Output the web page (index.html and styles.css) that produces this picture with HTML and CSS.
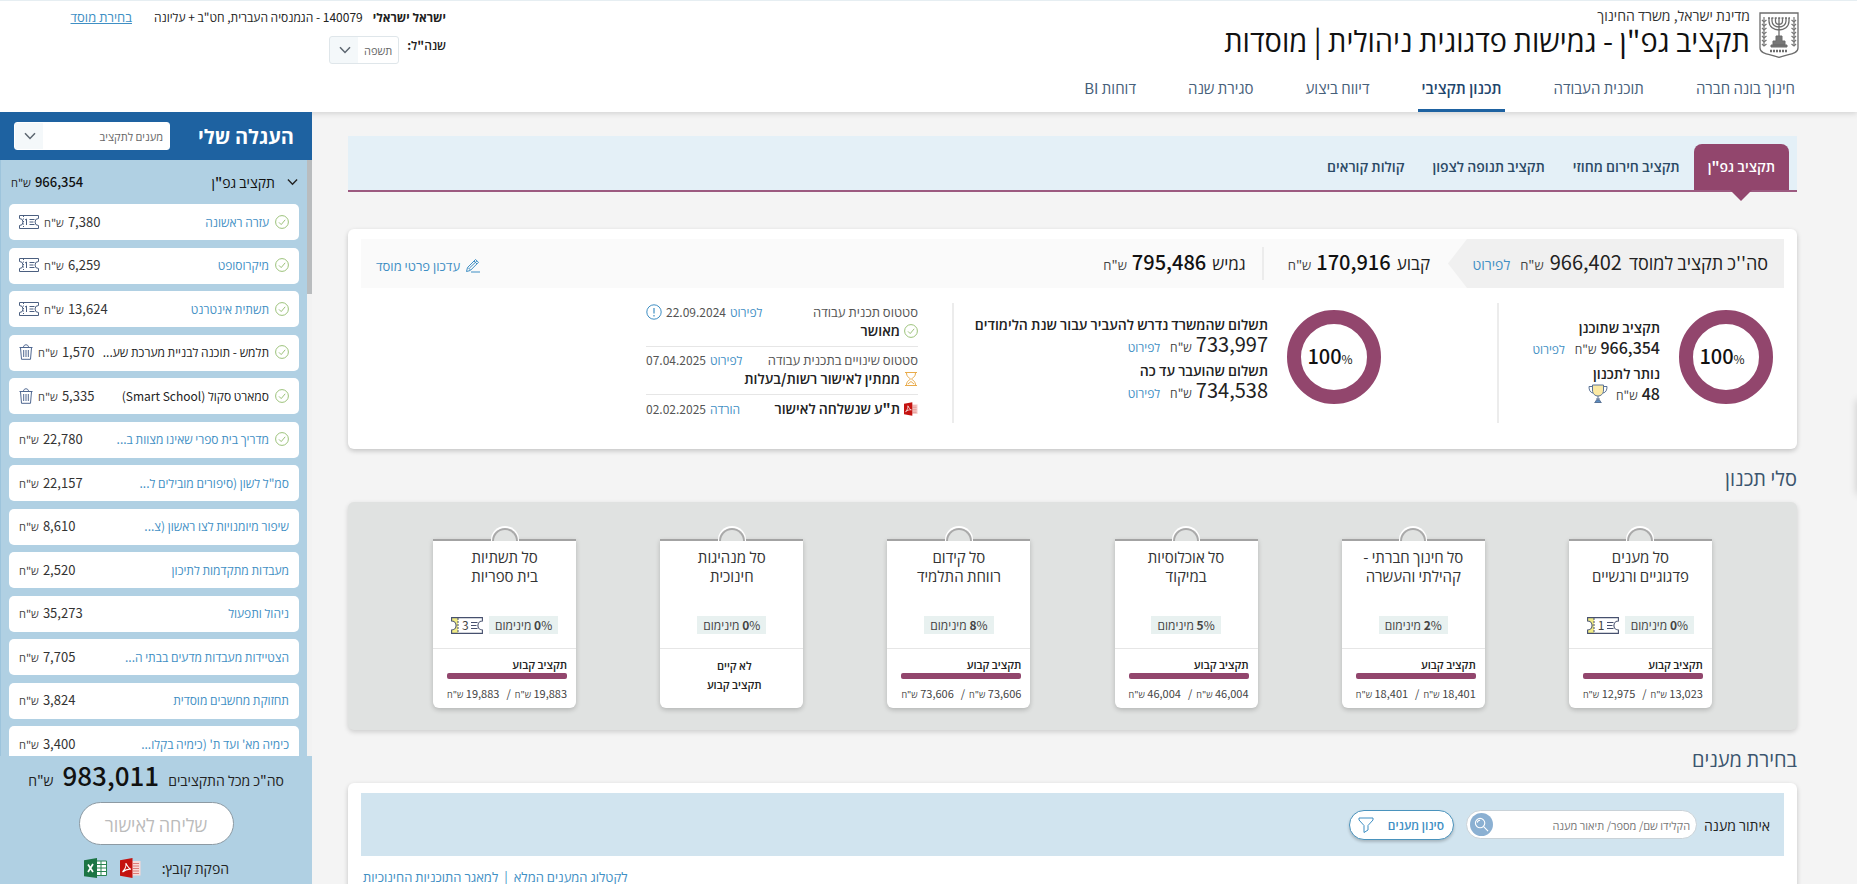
FILE: index.html
```html
<!DOCTYPE html>
<html lang="he" dir="rtl">
<head>
<meta charset="utf-8">
<meta name="viewport" content="width=device-width, initial-scale=1">
<title>תקציב גפ"ן</title>
<link rel="stylesheet" href="styles.css">
</head>
<body>
<svg class="sprite" aria-hidden="true">
  <symbol id="check" viewBox="0 0 14 14"><circle cx="7" cy="7" r="6.4" fill="none" stroke="#9cc27a" stroke-width="1"/><path d="M4 7.4 6.2 9.6 10.2 4.8" fill="none" stroke="#9cc27a" stroke-width="1"/></symbol>
  <symbol id="chevron" viewBox="0 0 12 8"><path d="M1 1.2 6 6.4 11 1.2" fill="none" stroke="currentColor" stroke-width="1.5"/></symbol>
  <symbol id="ticket-small" viewBox="0 0 20 14"><path d="M.5 .5H19.500V3.500A3.500 3.500 0 0 0 19.500 10.500V13.500H.5V10.500A3.500 3.500 0 0 0 .5 3.500Z" fill="#fff" stroke="#4b5f80"/><path d="M4.500 1V13" stroke="#4b5f80" stroke-dasharray="1 1.500"/><path d="M10.500 4.500H15.500M10.500 7H14.500M10.500 9.500H15.500" stroke="#4b5f80"/><path d="M6 5 7.500 4V10" fill="none" stroke="#4b5f80"/></symbol>
  <symbol id="ticket" viewBox="0 0 32 17"><path d="M.6 .6H31.400V4A4.500 4.500 0 0 0 31.400 13V16.400H.6V13A4.500 4.500 0 0 0 .6 4Z" fill="#fff"/><path d="M.6 .6H7V16.400H.6V13A4.500 4.500 0 0 0 .6 4Z" fill="#f2ec86"/><path d="M.6 .6H31.400V4A4.500 4.500 0 0 0 31.400 13V16.400H.6V13A4.500 4.500 0 0 0 .6 4Z" fill="none" stroke="#46506e" stroke-width="1.100"/><path d="M7 1V16" stroke="#46506e" stroke-dasharray="2 1"/><path d="M20 5.500H26.500M20 8.500H25.500M20 11.500H26.500" stroke="#46506e" stroke-width="1.200"/></symbol>
  <symbol id="trash" viewBox="0 0 14 16"><path d="M.5 3.500H13.500M4.500 3.200C4.500 0 9.500 0 9.500 3.200M1.500 3.700 2.500 15.300H11.500L12.500 3.700" fill="none" stroke="#4f6790"/><path d="M4.700 6V13M7 6V13M9.300 6V13" stroke="#4f6790"/></symbol>
  <symbol id="pdf" viewBox="0 0 21 20"><path d="M12 3H20.500V17.500H12Z" fill="#f8d9d7"/><path d="M13 5.500H19M13 8H19M13 10.500H19M13 13H19M13 15.500H19" stroke="#dd7b77"/><path d="M0 2.200 12.500 0V20L0 17.800Z" fill="#c4120f"/><path d="M2.500 14C5 11.500 6.500 7.500 5.800 5.200C8 9 9 10.800 11 11.200C8 10.800 5 12 2.500 14Z" fill="none" stroke="#fff" stroke-width="1.100"/></symbol>
  <symbol id="excel" viewBox="0 0 23 20"><path d="M12 3H22.500V17.500H12Z" fill="#fff" stroke="#2a8450"/><path d="M12 6.500H22M12 10H22M12 13.500H22M17 3V17" stroke="#2a8450"/><path d="M0 2.200 13 0V20L0 18.300Z" fill="#1d7544"/><path d="M4 6.500 9 14M9 6 4 14" stroke="#fff" stroke-width="1.700"/></symbol>
</svg>

<header class="top">
  <div class="top-main">
    <div class="brand">
      <svg class="emblem" viewBox="0 0 40 46" fill="none" stroke="#6d6d6d">
        <path d="M1 1H39V36C39 42 30 42 20 45.300C10 42 1 42 1 36Z" stroke-width="1.300"/>
        <path d="M5 5V34M35 5V34" stroke="#777" stroke-width="1.200"/>
        <path d="M3 8 5 10 7.500 8M3 12 5 14 7.500 12M3 16 5 18 7.500 16M3 20 5 22 7.500 20M3 24 5 26 7.500 24M3 28 5 30 7.500 28M3 32 5 34 7.500 32M32.500 8 35 10 37 8M32.500 12 35 14 37 12M32.500 16 35 18 37 16M32.500 20 35 22 37 20M32.500 24 35 26 37 24M32.500 28 35 30 37 28M32.500 32 35 34 37 32" stroke="#777" stroke-width="1.300"/>
        <path d="M10 6V9C10 21 30 21 30 9V6M13 6V9C13 17 27 17 27 9V6M16.500 6V9C16.500 13.500 23.500 13.500 23.500 9V6M20 6V24" stroke-width="1.300"/>
        <path d="M9 6H31" stroke-dasharray="2 1.400" stroke-width="1.600"/>
        <path d="M17 24H23V29H26V33H14V29H17ZM12 33H28V35H12Z" fill="#777"/>
        <path d="M11 39H29" stroke-width="2.500" stroke-dasharray="2 1"/>
      </svg>
      <div>
        <p class="ministry">מדינת ישראל, משרד החינוך</p>
        <h1>תקציב גפ"ן - גמישות פדגוגית ניהולית | מוסדות</h1>
      </div>
    </div>
    <nav class="menu" aria-label="ראשי">
      <a href="#">חינוך בונה חברה</a>
      <a href="#">תוכנית העבודה</a>
      <a href="#" class="on">תכנון תקציבי</a>
      <a href="#">דיווח ביצוע</a>
      <a href="#">סגירת שנה</a>
      <a href="#">דוחות BI</a>
    </nav>
  </div>
  <div class="account">
    <div class="who"><b>ישראל ישראלי</b><span>140079 - הגמנסיה העברית, חט"ב + עליונה</span><a href="#">בחירת מוסד</a></div>
    <div class="year"><label for="year">שנה"ל:</label>
      <span class="pick"><select id="year"><option>תשפה</option></select><svg><use href="#chevron"/></svg></span>
    </div>
  </div>
</header>

<div class="page">
<main>
  <nav class="tabs" aria-label="תקציבים">
    <a href="#" class="on">תקציב גפ"ן</a>
    <a href="#">תקציב חירום מחוזי</a>
    <a href="#">תקציב תנופה לצפון</a>
    <a href="#">קולות קוראים</a>
  </nav>

  <section class="card summary">
    <div class="strip">
      <div class="total"><span class="lead">סה''כ תקציב למוסד</span><span class="num">966,402</span><span class="nis">ש"ח</span><a href="#">לפירוט</a></div>
      <div class="part"><span>קבוע</span><b>170,916</b><span class="nis">ש"ח</span></div>
      <div class="part"><span>גמיש</span><b>795,486</b><span class="nis">ש"ח</span></div>
      <a class="edit" href="#"><svg viewBox="0 0 15 15" fill="none" stroke="#3f8fc4"><path d="M1.500 13.500 2.500 9.500 10.500 1.500 13.500 4.300 5.300 12.500ZM3 9.500 5.500 12M4.500 10 12 2.800M9 3 12 6M6 14H15"/></svg>עדכון פרטי מוסד</a>
    </div>
    <div class="details">
      <div class="planned">
        <div class="donut"><p><b>100</b><span>%</span></p></div>
        <div class="lines">
          <h3>תקציב שתוכנן</h3>
          <p><b>966,354</b><span class="nis">ש"ח</span><a href="#">לפירוט</a></p>
          <h3>נותר לתכנון</h3>
          <p><b>48</b><span class="nis">ש"ח</span><svg class="cup" viewBox="0 0 20 20" fill="none" stroke="#5a7396"><path d="M4.500 1H15.500V6C15.500 14 4.500 14 4.500 6Z" fill="#fbe9a4"/><path d="M4.500 2.500H1C1 6 2 8.500 5 9M15.500 2.500H19C19 6 18 8.500 15 9M10 12V17M8 15H12M6.500 18.500H13.500"/><path d="M7 18.500 8.500 16H11.500L13 18.500Z" fill="#5a8fc4"/></svg></p>
        </div>
      </div>
      <div class="paid">
        <div class="donut"><p><b>100</b><span>%</span></p></div>
        <div class="lines">
          <h3>תשלום שהמשרד נדרש להעביר עבור שנת הלימודים</h3>
          <p><span class="num">733,997</span><span class="nis">ש"ח</span><a href="#">לפירוט</a></p>
          <h3>תשלום שהועבר עד כה</h3>
          <p><span class="num">734,538</span><span class="nis">ש"ח</span><a href="#">לפירוט</a></p>
        </div>
      </div>
      <div class="status">
        <div class="state">
          <p><span>סטטוס תכנית עבודה</span><span class="when"><a href="#">לפירוט</a>22.09.2024<svg class="info" viewBox="0 0 16 16" fill="none" stroke="#3f8fc4"><circle cx="8" cy="8" r="7.200"/><path d="M8 4V9.500M8 11V12.500" stroke-width="1.200"/></svg></span></p>
          <strong><svg><use href="#check"/></svg>מאושר</strong>
        </div>
        <div class="state">
          <p><span>סטטוס שינויים בתכנית עבודה</span><span class="when"><a href="#">לפירוט</a>07.04.2025</span></p>
          <strong><svg viewBox="0 0 14 14" fill="none" stroke="#e9ab4a"><path d="M1 .5H13M1 13.500H13M2.500 .5C2.500 5 5 5.500 6.500 7C5 8.500 2.500 9 2.500 13.500M11.500 .5C11.500 5 9 5.500 7.500 7C9 8.500 11.500 9 11.500 13.500M4 12 7 9.500 10 12"/></svg>ממתין לאישור רשות/בעלות</strong>
        </div>
        <div class="state">
          <p><strong><svg><use href="#pdf"/></svg>ת"ע שנשלחה לאישור</strong><span class="when"><a href="#">הורדה</a>02.02.2025</span></p>
        </div>
      </div>
    </div>
  </section>

  <h2>סלי תכנון</h2>
  <section class="baskets">
    <article class="basket">
      <h3>סל מענים<br>פדגוגיים ורגשיים</h3>
      <div class="min"><span class="tag"><b>0</b><span>%</span> <span>מינימום</span></span><span class="ticket"><svg><use href="#ticket"/></svg><i>1</i></span></div>
      <div class="fixed"><h4>תקציב קבוע</h4><div class="bar"></div><p><span>13,023 <small>ש"ח</small></span><span class="slash">/</span><span>12,975 <small>ש"ח</small></span></p></div>
    </article>
    <article class="basket">
      <h3>סל חינוך חברתי -<br>קהילתי והעשרה</h3>
      <div class="min"><span class="tag"><b>2</b><span>%</span> <span>מינימום</span></span></div>
      <div class="fixed"><h4>תקציב קבוע</h4><div class="bar"></div><p><span>18,401 <small>ש"ח</small></span><span class="slash">/</span><span>18,401 <small>ש"ח</small></span></p></div>
    </article>
    <article class="basket">
      <h3>סל אוכלוסיות<br>במיקוד</h3>
      <div class="min"><span class="tag"><b>5</b><span>%</span> <span>מינימום</span></span></div>
      <div class="fixed"><h4>תקציב קבוע</h4><div class="bar"></div><p><span>46,004 <small>ש"ח</small></span><span class="slash">/</span><span>46,004 <small>ש"ח</small></span></p></div>
    </article>
    <article class="basket">
      <h3>סל קידום<br>רווחת התלמיד</h3>
      <div class="min"><span class="tag"><b>8</b><span>%</span> <span>מינימום</span></span></div>
      <div class="fixed"><h4>תקציב קבוע</h4><div class="bar"></div><p><span>73,606 <small>ש"ח</small></span><span class="slash">/</span><span>73,606 <small>ש"ח</small></span></p></div>
    </article>
    <article class="basket">
      <h3>סל מנהיגות<br>חינוכית</h3>
      <div class="min"><span class="tag"><b>0</b><span>%</span> <span>מינימום</span></span></div>
      <div class="fixed none"><h4>לא קיים<br>תקציב קבוע</h4></div>
    </article>
    <article class="basket">
      <h3>סל תשתיות<br>בית ספריות</h3>
      <div class="min"><span class="tag"><b>0</b><span>%</span> <span>מינימום</span></span><span class="ticket"><svg><use href="#ticket"/></svg><i>3</i></span></div>
      <div class="fixed"><h4>תקציב קבוע</h4><div class="bar"></div><p><span>19,883 <small>ש"ח</small></span><span class="slash">/</span><span>19,883 <small>ש"ח</small></span></p></div>
    </article>
  </section>

  <h2>בחירת מענים</h2>
  <section class="card choose">
    <form class="search">
      <label for="find">איתור מענה</label>
      <span class="field"><input id="find" type="text" placeholder="הקלידו שם/ מספר/ תיאור מענה"><button type="button" aria-label="חיפוש"><svg viewBox="0 0 16 16" fill="none" stroke="#fff" stroke-width="1.200"><circle cx="6.500" cy="6.500" r="5"/><path d="M10.300 10.300 15 15M3.500 6A3 3 0 0 1 6.500 3.500"/></svg></button></span>
      <button class="filter" type="button"><span>סינון מענים</span><svg viewBox="0 0 16 16" fill="none" stroke="#3f8fc4"><path d="M1 1H15V3L10 8.500V13L6 15.500V8.500L1 3Z"/></svg></button>
    </form>
    <p class="links"><a href="#">למאגר התוכניות החינוכיות</a><span>|</span><a href="#">לקטלוג המענים המלא</a></p>
  </section>
</main>

<aside class="cart">
  <div class="cart-head"><h2>העגלה שלי</h2>
    <span class="pick wide"><select aria-label="סינון עגלה"><option>מענים לתקציב</option></select><svg><use href="#chevron"/></svg></span>
  </div>
  <div class="cart-body">
    <div class="rail"><div class="thumb"></div></div>
    <div class="cart-scroll">
      <div class="group"><svg><use href="#chevron"/></svg><span>תקציב גפ"ן</span><b>966,354</b><small>ש"ח</small></div>
      <ul>
        <li><svg class="ok"><use href="#check"/></svg><a href="#">עזרה ראשונה</a><b>7,380</b><small>ש"ח</small><svg class="tk"><use href="#ticket-small"/></svg></li>
        <li><svg class="ok"><use href="#check"/></svg><a href="#">מיקרוסופט</a><b>6,259</b><small>ש"ח</small><svg class="tk"><use href="#ticket-small"/></svg></li>
        <li><svg class="ok"><use href="#check"/></svg><a href="#">תשתית אינטרנט</a><b>13,624</b><small>ש"ח</small><svg class="tk"><use href="#ticket-small"/></svg></li>
        <li><svg class="ok"><use href="#check"/></svg><span>תלמש - תוכנה לבניית מערכת שע...</span><b>1,570</b><small>ש"ח</small><svg class="bin"><use href="#trash"/></svg></li>
        <li><svg class="ok"><use href="#check"/></svg><span>סמארט סקול (Smart School)</span><b>5,335</b><small>ש"ח</small><svg class="bin"><use href="#trash"/></svg></li>
        <li><svg class="ok"><use href="#check"/></svg><a href="#">מדריך בית ספרי שאינו מצוות ב...</a><b>22,780</b><small>ש"ח</small></li>
        <li><a href="#">סמ"ל לשון (סיפורים מובילים ל...</a><b>22,157</b><small>ש"ח</small></li>
        <li><a href="#">שיפור מיומנויות לצו ראשון (צ...</a><b>8,610</b><small>ש"ח</small></li>
        <li><a href="#">מעבדות מתקדמות לתיכון</a><b>2,520</b><small>ש"ח</small></li>
        <li><a href="#">ניהול ותפעול</a><b>35,273</b><small>ש"ח</small></li>
        <li><a href="#">הצטיידות מעבדות מדעים בבתי ה...</a><b>7,705</b><small>ש"ח</small></li>
        <li><a href="#">תחזוקת מחשבים מוסדית</a><b>3,824</b><small>ש"ח</small></li>
        <li><a href="#">כימיה מא' ועד ת' (כימיה בקלו...</a><b>3,400</b><small>ש"ח</small></li>
      </ul>
    </div>
  </div>
  <div class="cart-foot">
    <p class="sum"><span>סה"כ מכל התקציבים</span><b>983,011</b><span>ש"ח</span></p>
    <button type="button" disabled>שליחה לאישור</button>
    <p class="files"><span>הפקת קובץ:</span><a href="#" aria-label="PDF"><svg class="f-pdf"><use href="#pdf"/></svg></a><a href="#" aria-label="Excel"><svg class="f-xls"><use href="#excel"/></svg></a></p>
  </div>
</aside>
</div>
<div class="edge-tab"></div>
</body>
</html>
```
FILE: styles.css
```css
*,*::before,*::after{box-sizing:border-box}
html,body{height:100%}
body{margin:0;display:flex;flex-direction:column;overflow:hidden;background:#f4f4f4;color:#222;font-family:"Noto Sans CJK JP","Open Sans","Liberation Sans",sans-serif;font-size:14px;line-height:20px}
h1,h2,h3,h4,p,ul{margin:0;padding:0;font-weight:400}
ul{list-style:none}
a{color:#3f8fc4;text-decoration:none}
svg{display:block;flex:none}
button,input,select{font:inherit;color:inherit}
.sprite{position:absolute;width:0;height:0}

.top{display:flex;justify-content:space-between;flex:none;height:112px;background:#fff;border-top:1px solid #e6eef2;box-shadow:0 1px 6px rgba(0,0,0,.16);position:relative}
.top-main{display:flex;flex-direction:column;justify-content:space-between;padding:5px 58px 0 0}
.brand{display:flex;gap:9px}
.emblem{width:40px;height:46px;margin-top:6px}
.ministry{font-size:14px;line-height:18px;color:#333}
h1{font-size:29px;line-height:30px;color:#111}
.menu{display:flex;gap:44px}
.menu a{padding:0 4px;height:34px;font-size:15px;line-height:20px;color:#47607a}
.menu .on{border-bottom:3px solid #1e62a1;color:#1f466d;font-weight:600}
.account{width:446px;font-size:12px;line-height:20px}
.who{display:flex;padding-top:6px}
.who span{margin-right:10px}
.who a{margin-right:22px;font-size:13px;text-decoration:underline}
.year{display:flex;gap:8px;margin-top:9px;line-height:18px;font-weight:600}
.pick{display:flex;align-items:center;position:relative;width:70px;height:28px;border:1px solid #dfe6ea;border-radius:3px;background:linear-gradient(90deg,#f4f8fa 28px,#fff 28px);color:#666}
.pick select{appearance:none;width:100%;height:100%;border:0;background:none;padding:0 6px;font-size:11px;font-weight:400;color:#666}
.pick svg{position:absolute;left:9px;width:12px;height:8px;color:#5c6670;pointer-events:none}
.pick.wide{width:156px;border-color:#fff}

.page{display:flex;flex:1;min-height:0}
main{flex:1;min-width:0;padding:24px 60px 0 36px;overflow:hidden}
.tabs{display:flex;align-items:flex-end;height:56px;padding-right:8px;background:#e4f0f7;border-bottom:2px solid #9c5a80}
.tabs a{margin-right:28px;padding-bottom:2px;font-size:14px;line-height:44px;font-weight:600;color:#2c4a66}
.tabs .on{position:relative;margin:0;padding:0 14px 2px;border-radius:8px 8px 0 0;background:#92466d;color:#fff}
.tabs .on::after{content:"";position:absolute;top:100%;left:50%;margin-left:-11px;border:11px solid transparent;border-top-color:#92466d;border-bottom:0}
.tabs .on + a{margin-right:14px}

.card{background:#fff;border-radius:6px;box-shadow:0 2px 5px rgba(0,0,0,.2)}
.summary{height:220px;margin-top:37px;padding:10px 13px}
.strip{display:flex;align-items:center;height:49px;background:#fafafa}
.nis{font-size:13px;color:#444}
.total{display:flex;align-items:baseline;width:336px;height:49px;padding-right:16px;line-height:46px;background:#f0f0f0;clip-path:polygon(0 50%,19px 0,100% 0,100% 100%,19px 100%)}
.lead{font-size:18px}
.total .num{margin:0 7px 0 6px;font-size:20px}
.total a{margin-right:10px;font-size:14px}
.part{display:flex;align-items:baseline;padding:0 18px;font-size:17px;line-height:30px}
.part:nth-child(2){padding-left:24px}
.part b{margin:0 6px 0 5px;font-size:20px;font-weight:500;color:#111}
.part + .part{border-right:2px solid #ececec;padding-right:16px}
.edit{display:flex;gap:5px;align-items:center;margin-right:auto;padding:4px 0 0 15px;font-size:13px}
.edit svg{width:15px;height:15px}
.details{display:flex;padding-top:15px}
.planned,.paid{display:flex;align-items:center;height:120px;border-left:2px solid #ececec}
.planned{width:287px;padding-right:11px;gap:19px}
.paid{width:545px;padding-right:116px;gap:19px}
.donut{display:flex;align-items:center;justify-content:center;flex:none;width:94px;height:94px;margin-bottom:12px;border:14px solid #92466d;border-radius:50%;background:#fff;font-size:12px}
.donut b{font-size:20px;font-weight:500;color:#111}
.donut p{margin-right:8px}
.lines{margin-bottom:2px;white-space:nowrap}
.paid .lines{margin-bottom:8px}
.lines h3{font-size:14px;line-height:22px;font-weight:600}
.lines p{display:flex;align-items:baseline;height:24px;line-height:18px}
.lines b{font-size:16px;font-weight:500;margin-left:4px}
.lines .num{font-size:20px;margin-left:4px}
.lines .nis{font-size:12px}
.lines a{margin-right:10px;font-size:12px}
.lines .cup{align-self:flex-start;width:20px;height:20px;margin-right:8px}
.status{width:272px;margin-right:34px}
.state{padding-bottom:6px;margin-bottom:4px;border-bottom:1px solid #e6e6e6}
.state:last-child{border:0;margin:0}
.state p{display:flex;justify-content:space-between;align-items:center;font-size:13px;line-height:18px;color:#555}
.state strong{display:flex;align-items:center;gap:4px;font-size:14px;line-height:19px;font-weight:600;color:#222}
.state svg{width:14px;height:14px}
.when{display:flex;align-items:center;gap:4px;font-size:12px}
.when .info{width:16px;height:16px}

main > h2{margin-top:17px;font-size:20px;line-height:24px;color:#3b556e}
.baskets{display:grid;grid-template-columns:repeat(6,1fr);justify-items:center;height:228px;margin-top:12px;padding:37px 43px 0;border-radius:6px;background:#e0e2e1;box-shadow:0 2px 5px rgba(0,0,0,.16)}
.basket{position:relative;display:flex;flex-direction:column;width:143px;height:169px;border-top:2px solid #a3a3a3;border-radius:0 0 6px 6px;background:#fff;box-shadow:0 2px 5px rgba(0,0,0,.2)}
.basket::before{content:"";position:absolute;left:50%;bottom:100%;width:26px;height:13px;margin-left:-13px;border:2px solid #a9a9a9;border-bottom:0;border-radius:13px 13px 0 0;background:#e0e2e1;box-shadow:0 -1px 0 1px #fff;clip-path:inset(-4px -4px 0)}
.basket h3{flex:none;height:70px;padding-top:6px;text-align:center;font-size:15px;line-height:19px;color:#333}
.min{display:flex;align-items:center;justify-content:center;gap:6px;flex:none;height:37px;padding-bottom:9px;font-size:12px}
.tag{padding:0 6px;line-height:18px;background:#e8f1f0;color:#444}
.ticket{position:relative;width:32px;height:17px}
.ticket svg{width:32px;height:17px}
.ticket i{position:absolute;left:11px;top:0;font-style:normal;line-height:16px;font-size:12px;color:#444}
.fixed{flex:none;border-top:1px solid #e6e6e6;padding:6px 9px 0 14px}
.fixed h4{font-size:11px;line-height:18px;font-weight:600}
.fixed.none{padding-top:7px;text-align:center}
.fixed.none h4{line-height:19px}
.bar{height:6px;border-radius:2px;background:#92466d}
.fixed p{display:flex;margin-top:5px;font-size:11px;line-height:18px;color:#444;white-space:nowrap}
.fixed small{font-size:9px}
.slash{margin:0 4px 0 auto}

.choose{height:200px;margin-top:12px;padding:10px 13px}
.search{display:flex;align-items:center;height:63px;padding:0 14px;background:#d1e4ef}
.search label{font-size:14px}
.field{position:relative;width:231px;height:29px;margin-right:7px}
.field input{width:100%;height:100%;padding:0 6px 0 34px;border:1px solid #c9d2d8;border-radius:15px;background:#fff;font-size:11px}
.field input::placeholder{color:#777}
.field button{position:absolute;left:4px;top:3px;display:flex;align-items:center;justify-content:center;width:23px;height:23px;padding:0;border:0;border-radius:50%;background:#8bb0d2}
.field button svg{width:15px;height:15px}
.filter{display:flex;align-items:center;justify-content:space-between;width:105px;height:30px;margin-right:12px;padding:0 9px 0 8px;border:1px solid #4a93bd;border-radius:15px;background:#fff;color:#3f8fc4;font-size:12px;font-weight:600;box-shadow:0 2px 3px rgba(0,0,0,.2)}
.filter svg{width:16px;height:16px}
.links{display:flex;flex-direction:row-reverse;justify-content:flex-start;gap:6px;padding:11px 0 0 2px;font-size:13px;color:#3f8fc4}

.cart{display:flex;flex-direction:column;flex:none;width:312px;position:relative;background:#b0d0e3}
.cart-head{display:flex;align-items:center;justify-content:space-between;flex:none;height:48px;padding:0 18px 0 14px;background:#1e62a1;color:#fff}
.cart-head h2{font-size:20px;line-height:30px;font-weight:700}
.cart-body{display:flex;flex:1;min-height:0;overflow:hidden}
.rail{flex:none;width:5px;background:#f2f2f2}
.thumb{height:134px;background:#b9bcbe}
.cart-scroll{display:flex;flex-direction:column;flex:1;min-width:0;padding:0 8px;border-left:1px solid #9dc4dc}
.group{display:flex;align-items:center;flex:none;height:44px;padding:0 1px 0 2px;font-size:14px}
.group svg{width:11px;height:8px;margin-left:12px}
.group span{font-weight:500;color:#111}
.group b{margin:0 auto 0 4px;font-size:13px;font-weight:500;color:#111}
.group small{font-size:11px}
.cart ul{display:flex;flex:1;flex-direction:column;justify-content:space-between;margin-bottom:-6px}
.cart li{display:flex;align-items:center;height:36px;padding:0 10px 1px;border-radius:5px;background:#fff;white-space:nowrap;font-size:12px}
.ok{width:14px;height:14px;margin-left:6px}
.cart li b{margin:0 auto 0 4px;font-size:13px;font-weight:400;color:#333}
.cart li small{font-size:11px;color:#444}
.tk{width:20px;height:14px;margin-right:5px}
.bin{width:14px;height:16px;margin-right:5px}
.cart-foot{display:flex;flex-direction:column;align-items:center;flex:none;height:128px}
.sum{display:flex;align-items:baseline;gap:9px;height:46px;font-size:14px;line-height:38px}
.sum b{font-size:26px;font-weight:500;color:#111}
.cart-foot button{width:155px;height:43px;border:1px solid #8d9aa3;border-radius:22px;background:#fff;color:#bbb;font-size:18px}
.files{display:flex;align-items:center;gap:13px;width:100%;padding:8px 83px 0 0;font-size:14px;line-height:30px}
.files span{margin-left:8px}
.f-pdf{width:21px;height:20px}
.f-xls{width:23px;height:20px}
.edge-tab{position:fixed;right:-8px;top:400px;width:8px;height:94px;box-shadow:0 0 8px rgba(0,0,0,.18)}
```
